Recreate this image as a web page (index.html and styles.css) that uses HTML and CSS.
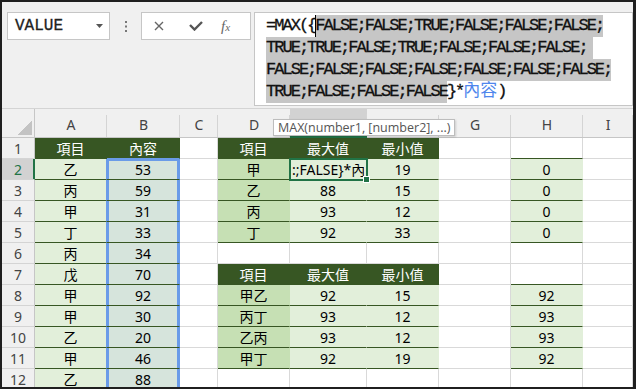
FILE: index.html
```html
<!DOCTYPE html>
<html lang="zh-Hant">
<head>
    <meta charset="UTF-8">
    <title>MAX</title>
    <link rel="stylesheet" href="styles.css">
</head>
<body>
<div class="window">
    <div class="toolbar">
        <div class="namebox">
            <span>VALUE</span>
            <svg width="7" height="4" viewBox="0 0 7 4"><polygon points="0,0 7,0 3.5,4" fill="#555"/></svg>
        </div>
        <div class="grip">
            <svg width="2" height="11" viewBox="0 0 2 11"><rect y="0" width="2" height="2" fill="#777"/><rect y="4.5" width="2" height="2" fill="#777"/><rect y="9" width="2" height="2" fill="#777"/></svg>
        </div>
        <div class="btns">
            <svg class="x" width="10" height="10" viewBox="0 0 10 10"><path d="M1 1L9 9M9 1L1 9" stroke="#666" stroke-width="1.4" fill="none"/></svg>
            <svg class="ok" width="14" height="10" viewBox="0 0 14 10"><path d="M1 4L5.5 8.5L13 1" stroke="#555" stroke-width="2.4" fill="none"/></svg>
            <span class="fx">f<small>x</small></span>
        </div>
        <div class="formula">
            <div class="ln">=MAX({<span class="hl cur">FALSE;FALSE;TRUE;FALSE;FALSE;FALSE;</span></div>
            <div class="ln"><span class="hl wide">TRUE;TRUE;FALSE;TRUE;FALSE;FALSE;FALSE;</span></div>
            <div class="ln"><span class="hl">FALSE;FALSE;FALSE;FALSE;FALSE;FALSE;FALSE;</span></div>
            <div class="ln"><span class="hl">TRUE;FALSE;FALSE;FALSE</span>}*<span class="ref">內容</span>)</div>
        </div>
    </div>

    <div class="sheet">
        <div class="grid">
            <div class="corner"></div>
            <div class="col">A</div><div class="col">B</div><div class="col">C</div><div class="col">D</div>
            <div class="col on">E</div><div class="col">F</div><div class="col">G</div><div class="col">H</div><div class="col">I</div>

            <div class="rh">1</div>
            <div class="th">項目</div><div class="th b1">內容</div><div class="c"></div>
            <div class="th">項目</div><div class="th">最大值</div><div class="th">最小值</div>
            <div class="c"></div><div class="c hg"></div><div class="c"></div>

            <div class="rh on">2</div>
            <div class="lt ra">乙</div><div class="sel s1">53</div><div class="c"></div>
            <div class="md">甲</div><div class="lt act"><span>:;FALSE}*內容)</span></div><div class="lt">19</div>
            <div class="c"></div><div class="lt">0</div><div class="c"></div>

            <div class="rh">3</div>
            <div class="lt ra">丙</div><div class="sel">59</div><div class="c"></div>
            <div class="md">乙</div><div class="lt">88</div><div class="lt">15</div>
            <div class="c"></div><div class="lt">0</div><div class="c"></div>

            <div class="rh">4</div>
            <div class="lt ra">甲</div><div class="sel">31</div><div class="c"></div>
            <div class="md">丙</div><div class="lt">93</div><div class="lt">12</div>
            <div class="c"></div><div class="lt">0</div><div class="c"></div>

            <div class="rh">5</div>
            <div class="lt ra">丁</div><div class="sel">33</div><div class="c"></div>
            <div class="md">丁</div><div class="lt">92</div><div class="lt">33</div>
            <div class="c"></div><div class="lt">0</div><div class="c"></div>

            <div class="rh">6</div>
            <div class="lt ra">丙</div><div class="sel">34</div><div class="c"></div>
            <div class="c"></div><div class="c"></div><div class="c"></div>
            <div class="c"></div><div class="c"></div><div class="c"></div>

            <div class="rh">7</div>
            <div class="lt ra">戊</div><div class="sel">70</div><div class="c"></div>
            <div class="th">項目</div><div class="th">最大值</div><div class="th">最小值</div>
            <div class="c"></div><div class="c hg"></div><div class="c"></div>

            <div class="rh">8</div>
            <div class="lt ra">甲</div><div class="sel">92</div><div class="c"></div>
            <div class="md">甲乙</div><div class="lt">92</div><div class="lt">15</div>
            <div class="c"></div><div class="lt">92</div><div class="c"></div>

            <div class="rh">9</div>
            <div class="lt ra">甲</div><div class="sel">30</div><div class="c"></div>
            <div class="md">丙丁</div><div class="lt">93</div><div class="lt">12</div>
            <div class="c"></div><div class="lt">93</div><div class="c"></div>

            <div class="rh">10</div>
            <div class="lt ra">乙</div><div class="sel">20</div><div class="c"></div>
            <div class="md">乙丙</div><div class="lt">93</div><div class="lt">12</div>
            <div class="c"></div><div class="lt">93</div><div class="c"></div>

            <div class="rh">11</div>
            <div class="lt ra">甲</div><div class="sel">46</div><div class="c"></div>
            <div class="md">甲丁</div><div class="lt">92</div><div class="lt">19</div>
            <div class="c"></div><div class="lt">92</div><div class="c"></div>

            <div class="rh">12</div>
            <div class="lt ra">乙</div><div class="sel">88</div><div class="c"></div>
            <div class="c"></div><div class="c"></div><div class="c"></div>
            <div class="c"></div><div class="c"></div><div class="c"></div>
        </div>

        <div class="tip">MAX(number1, [number2], ...)</div>
    </div>
</div>
</body>
</html>
```

FILE: styles.css
```css
body{
    margin: 0;
}
.window{
    width: 636px;
    height: 389px;
    box-sizing: border-box;
    border: 2px solid #1f1f1f;
    border-right-width: 3px;
    background-color: #f0f0f0;
    overflow: hidden;
}

/* formula bar */
.toolbar{
    display: flex;
    align-items: flex-start;
    height: 106px;
    padding-left: 5px;
}
.namebox{
    margin-top: 10px;
    width: 103px;
    height: 28px;
    box-sizing: border-box;
    border: 1px solid #c6c6c6;
    background-color: #fff;
    display: flex;
    align-items: center;
    justify-content: space-between;
    padding: 0 6px 0 7px;
    font-family: "Liberation Mono", monospace;
    font-size: 16px;
    -webkit-text-stroke: 0.3px #222;
    color: #222;
}
.grip{
    margin-top: 10px;
    width: 31px;
    height: 28px;
    display: flex;
    align-items: center;
    justify-content: center;
}
.btns{
    margin-top: 10px;
    width: 110px;
    height: 28px;
    box-sizing: border-box;
    border: 1px solid #c6c6c6;
    background-color: #fff;
    display: flex;
    align-items: center;
    padding-left: 12px;
}
.btns .ok{
    margin-left: 25px;
}
.btns .fx{
    margin-left: 18px;
    font-family: "Liberation Serif", serif;
    font-style: italic;
    font-size: 15px;
    color: #666;
}
.btns .fx small{
    font-size: 11px;
}
.formula{
    flex-shrink: 0;
    margin: 10px 0 0 3px;
    width: 379px;
    height: 94px;
    box-sizing: border-box;
    border: 1px solid #c6c6c6;
    background-color: #fff;
    padding: 2px 0 0 11px;
    font-family: "Liberation Mono", "Noto Sans CJK TC", monospace;
    font-size: 17px;
    letter-spacing: -1.98px;
    -webkit-text-stroke: 0.3px #111;
    color: #111;
}
.ln{
    height: 22px;
    line-height: 22px;
    white-space: nowrap;
}
.hl{
    display: inline-block;
    vertical-align: top;
    height: 22px;
    background-color: #c6c6c6;
}
.hl.cur{
    box-shadow: inset 1px 0 #000;
}
.hl.wide{
    padding-right: 6px;
}
.ref{
    color: #4f86ec;
    -webkit-text-stroke: 0;
    letter-spacing: 0;
}

/* sheet */
.sheet{
    position: relative;
    border-top: 1px solid #d4d4d4;
    background-color: #fff;
}
.grid{
    display: grid;
    grid-template-columns: 33px 72px 73px 38px 72px 77px 72px 72px 72px 1fr;
    grid-template-rows: 29px repeat(12, 21px);
    font-family: "Noto Sans", "Noto Sans CJK TC", sans-serif;
    font-size: 14px;
    color: #000;
}
.grid > div{
    box-sizing: border-box;
    display: flex;
    align-items: center;
    justify-content: center;
    border-right: 1px solid #d9d9d9;
    border-bottom: 1px solid #d9d9d9;
}
.grid .corner{
    background: #f0f0f0 linear-gradient(135deg, transparent 50%, #c3c3c3 50%) no-repeat right 2px bottom 2px / 14px 14px;
    border-right-color: #c6c6c6;
    border-bottom-color: #c6c6c6;
}
.grid .col{
    background: #f0f0f0 linear-gradient(#d4d4d4, #d4d4d4) no-repeat right bottom / 1px 22px;
    border-right: 0;
    border-bottom-color: #c6c6c6;
    color: #444;
    padding-top: 3px;
}
.grid .col.on{
    background-color: #d2d2d2;
    border-bottom: 2px solid #217346;
}
.grid .rh{
    background-color: #f0f0f0;
    border-right-color: #c6c6c6;
    border-bottom-color: #d4d4d4;
    color: #444;
}
.grid .rh.on{
    background-color: #d2d2d2;
    color: #217346;
    border-right-color: #217346;
    box-shadow: inset -1px 0 #217346;
}

/* table cells */
.grid .th{
    background-color: #375623;
    border-color: #375623;
    color: #fff;
}
.grid .lt{
    background-color: #e2efda;
    border-right-color: #e2efda;
    border-bottom-color: #375623;
}
.grid .md{
    background-color: #c6e0b4;
    border-right-color: #c6e0b4;
    border-bottom-color: #375623;
}
.grid .hg{
    border-bottom-color: #375623;
}

/* range referenced in the formula */
.grid .ra{
    border-right-color: #6a9be8;
}
.grid .b1{
    border-bottom-color: #6a9be8;
}
.grid .sel{
    background-color: #d6e4dc;
    border-right-color: #6a9be8;
    border-bottom-color: #375623;
    box-shadow: inset 2px 0 #6a9be8, inset -2px 0 #6a9be8;
}
.grid .sel.s1{
    box-shadow: inset 2px 0 #6a9be8, inset -2px 0 #6a9be8, inset 0 2px #6a9be8;
}

/* active cell in edit mode */
.grid .act{
    position: relative;
    z-index: 2;
    justify-content: flex-start;
    padding-left: 2px;
    outline: 2px solid #217346;
    outline-offset: -1px;
    white-space: nowrap;
}
.grid .act span{
    overflow: hidden;
    width: 72px;
}
.grid .act::after{
    content: "";
    position: absolute;
    right: -4px;
    bottom: -4px;
    width: 5px;
    height: 5px;
    background-color: #217346;
    border: 1px solid #fff;
}

.tip{
    position: absolute;
    left: 271px;
    top: 10px;
    height: 17px;
    box-sizing: border-box;
    padding: 0 4px;
    border: 1px solid #bdbdbd;
    background-color: #fff;
    box-shadow: 1px 1px 2px rgba(0, 0, 0, 0.15);
    font-family: "Open Sans", sans-serif;
    font-size: 12.5px;
    line-height: 15px;
    color: #555;
    white-space: nowrap;
    z-index: 3;
}
```
